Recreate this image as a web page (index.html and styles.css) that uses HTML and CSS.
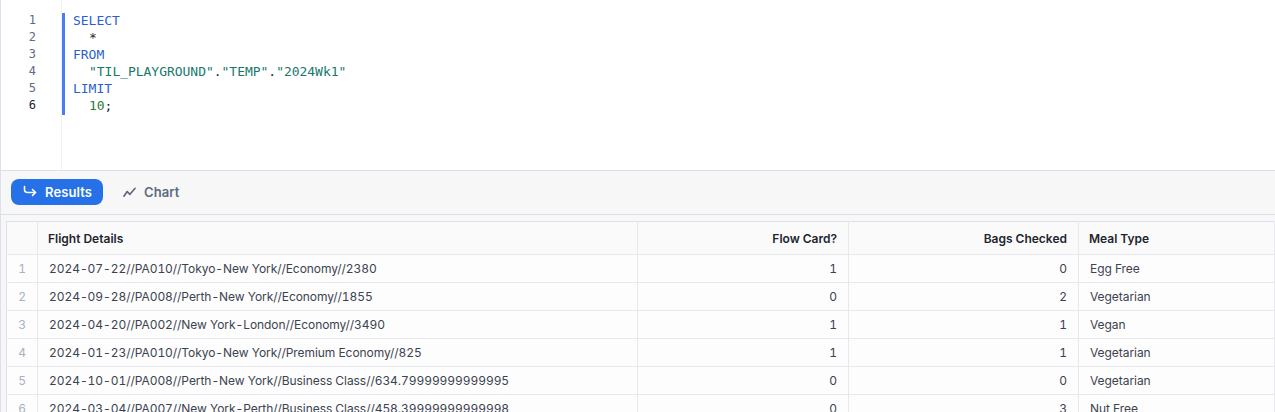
FILE: index.html
```html
<!DOCTYPE html>
<html lang="en">
<head>
<meta charset="utf-8">
<title>Query results</title>
<link rel="stylesheet" href="styles.css">
</head>
<body>
<div class="app">
  <section class="editor">
    <div class="gutter">
      <span>1</span><span>2</span><span>3</span><span>4</span><span>5</span><span class="active">6</span>
    </div>
    <div class="code-wrap">
      <div class="code">
        <div class="line"><span class="kw">SELECT</span></div>
        <div class="line indent"><span class="star">*</span></div>
        <div class="line"><span class="kw">FROM</span></div>
        <div class="line indent"><span class="str">"TIL_PLAYGROUND"</span><span class="star">.</span><span class="str">"TEMP"</span><span class="star">.</span><span class="str">"2024Wk1"</span></div>
        <div class="line"><span class="kw">LIMIT</span></div>
        <div class="line indent"><span class="num">10</span><span class="star">;</span></div>
      </div>
    </div>
  </section>
  <nav class="toolbar">
    <button class="tab tab-active">
      <svg class="icon icon-results" viewBox="0 0 14 14" fill="none" stroke="currentColor" stroke-width="1.6" stroke-linecap="round" stroke-linejoin="round"><path d="M1.500 1.500v3a3 3 0 0 0 3 3h8"/><path d="M9.500 4.500l3 3-3 3"/></svg>
      Results
    </button>
    <button class="tab">
      <svg class="icon" viewBox="0 0 14 14" fill="none" stroke="currentColor" stroke-width="1.8" stroke-linecap="round" stroke-linejoin="round"><path d="M1 11.500l3.500-5 3 3L13 3"/></svg>
      Chart
    </button>
  </nav>
  <div class="table-wrap">
    <table class="grid">
      <colgroup><col class="c-idx"><col class="c-flight"><col class="c-flow"><col class="c-bags"><col></colgroup>
      <thead>
        <tr><th></th><th class="first">Flight Details</th><th class="r">Flow Card?</th><th class="r">Bags Checked</th><th class="first">Meal Type</th></tr>
      </thead>
      <tbody>
        <tr><td class="idx">1</td><td>2024-07-22//PA010//Tokyo-New York//Economy//2380</td><td class="r">1</td><td class="r">0</td><td>Egg Free</td></tr>
        <tr><td class="idx">2</td><td>2024-09-28//PA008//Perth-New York//Economy//1855</td><td class="r">0</td><td class="r">2</td><td>Vegetarian</td></tr>
        <tr><td class="idx">3</td><td>2024-04-20//PA002//New York-London//Economy//3490</td><td class="r">1</td><td class="r">1</td><td>Vegan</td></tr>
        <tr><td class="idx">4</td><td>2024-01-23//PA010//Tokyo-New York//Premium Economy//825</td><td class="r">1</td><td class="r">1</td><td>Vegetarian</td></tr>
        <tr><td class="idx">5</td><td>2024-10-01//PA008//Perth-New York//Business Class//634.79999999999995</td><td class="r">0</td><td class="r">0</td><td>Vegetarian</td></tr>
        <tr><td class="idx">6</td><td>2024-03-04//PA007//New York-Perth//Business Class//458.39999999999998</td><td class="r">0</td><td class="r">3</td><td>Nut Free</td></tr>
      </tbody>
    </table>
  </div>
</div>
</body>
</html>
```
FILE: styles.css
```css
* { box-sizing: border-box; }
html, body { margin: 0; height: 100%; overflow: hidden; background: #fff; }
.app {
  height: 412px;
  border-left: 1px solid #dcdfee;
  font-family: Inter, "Liberation Sans", sans-serif;
  overflow: hidden;
}
.editor {
  display: flex;
  height: 170px;
  background: #fff;
  font: 13px/15px "DejaVu Sans Mono", "Liberation Mono", monospace;
  letter-spacing: -0.03px;
}
.gutter {
  width: 61px;
  padding: 12px 25px 0 0;
  border-right: 1px solid #f1f2f6;
  display: flex;
  flex-direction: column;
  align-items: flex-end;
  color: #5f6a85;
  font-size: 12px;
  line-height: 17px;
}
.gutter .active { color: #1e252f; }
.code-wrap { padding-top: 13px; flex: 1; }
.code { border-left: 3px solid #4a7cf3; padding-left: 8px; }
.line { height: 17px; }
.indent { padding-left: 16px; }
.kw { color: #2b5fcf; }
.str { color: #17796b; }
.num { color: #2a7a3a; }
.star { color: #1e252f; }
.toolbar {
  height: 45px;
  display: flex;
  align-items: flex-start;
  gap: 8px;
  padding: 8px 10px 0;
  background: #f7f7f8;
  border-top: 1px solid #dcdfee;
  border-bottom: 1px solid #dcdfee;
}
.tab {
  display: flex;
  align-items: center;
  gap: 8px;
  height: 26px;
  padding: 0 11px 0 12px;
  border: 0;
  border-radius: 8px;
  background: transparent;
  color: #5d6a80;
  font: 600 13px Inter, "Liberation Sans", sans-serif;
  letter-spacing: 0.1px;
}
.tab-active { background: #2670e8; color: #fff; }
.icon { width: 13px; height: 14px; }
.icon-results { width: 14px; }
.table-wrap { padding: 6px 0 0 5px; background: #f7f7f8; }
.grid {
  width: 100%;
  table-layout: fixed;
  border-collapse: collapse;
  background: #fdfdfd;
  font-size: 12px;
  font-variant-numeric: tabular-nums;
  color: #3c4350;
  border-top: 1px solid #dcdfee;
  border-left: 1px solid #dcdfee;
}
.c-idx { width: 31px; }
.c-flight { width: 600px; }
.c-flow { width: 211px; }
.c-bags { width: 230px; }
.grid th, .grid td {
  padding: 0 11px;
  border-right: 1px solid #e8e9ee;
  border-bottom: 1px solid #e8e9ee;
  text-align: left;
  white-space: nowrap;
  overflow: hidden;
}
.grid th { height: 33px; font-weight: 600; color: #1e252f; background: #fafafa; font-variant-numeric: normal; }
.grid th.first { padding-left: 10px; }
.grid td { height: 28px; letter-spacing: -0.06px; }
.grid .r { text-align: right; }
.grid .idx { padding: 0; text-align: center; color: #a9b0bf; }
```
